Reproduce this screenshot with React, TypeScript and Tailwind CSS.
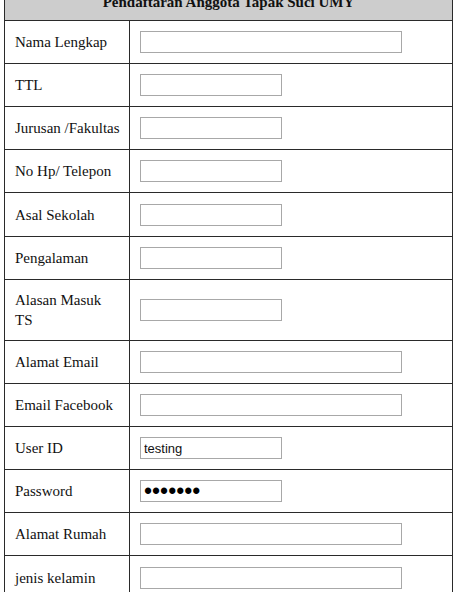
import React from "react";

interface Field {
  label: string;
  wide: boolean;
  h: string;
  value?: string;
  type?: string;
}

const fields: Field[] = [
  { label: "Nama Lengkap", wide: true, h: "h-[43px]" },
  { label: "TTL", wide: false, h: "h-[43px]" },
  { label: "Jurusan /Fakultas", wide: false, h: "h-[43px]" },
  { label: "No Hp/ Telepon", wide: false, h: "h-[43px]" },
  { label: "Asal Sekolah", wide: false, h: "h-[44px]" },
  { label: "Pengalaman", wide: false, h: "h-[43px]" },
  { label: "Alasan Masuk TS", wide: false, h: "h-[61px]" },
  { label: "Alamat Email", wide: true, h: "h-[43px]" },
  { label: "Email Facebook", wide: true, h: "h-[43px]" },
  { label: "User ID", wide: false, h: "h-[43px]", value: "testing" },
  { label: "Password", wide: false, h: "h-[43px]", value: "1234567", type: "password" },
  { label: "Alamat Rumah", wide: true, h: "h-[43px]" },
  { label: "jenis kelamin", wide: true, h: "h-[43px]" },
];

export default function App() {
  return (
    <div className="min-h-screen bg-white overflow-hidden" style={{ fontFamily: '"Liberation Serif", "Times New Roman", serif' }}>
      <div className="ml-[4px] mt-[-12px] w-[449px] border border-[#2a2a2a] text-[15px] text-[#111]">
        {/* header */}
        <div className="h-[32px] pt-[5px] bg-[#cdcdcd] border-b border-[#2a2a2a] text-center font-bold leading-[17px]">
          Pendaftaran Anggota Tapak Suci UMY
        </div>

        {fields.map((f, i) => (
          <div
            key={i}
            className={`grid grid-cols-[125px_1fr] ${f.h} ${i < fields.length - 1 ? "border-b border-[#2a2a2a]" : ""}`}
          >
            <div className="flex items-center border-r border-[#2a2a2a] pl-[10px] pr-[8px] leading-[20px]">
              {f.label}
            </div>
            <div className="flex items-center pl-[10px]">
              <input
                type={f.type ?? "text"}
                defaultValue={f.value ?? ""}
                readOnly
                className={`${f.wide ? "w-[262px]" : "w-[142px]"} h-[22px] border border-[#a8a8a8] bg-white px-[3px] outline-none ${
                  f.type === "password" ? "text-[23px] leading-[20px] text-black" : "text-[13px] text-[#111]"
                }`}
                style={{ fontFamily: '"Liberation Sans", Arial, sans-serif' }}
              />
            </div>
          </div>
        ))}
      </div>
    </div>
  );
}
